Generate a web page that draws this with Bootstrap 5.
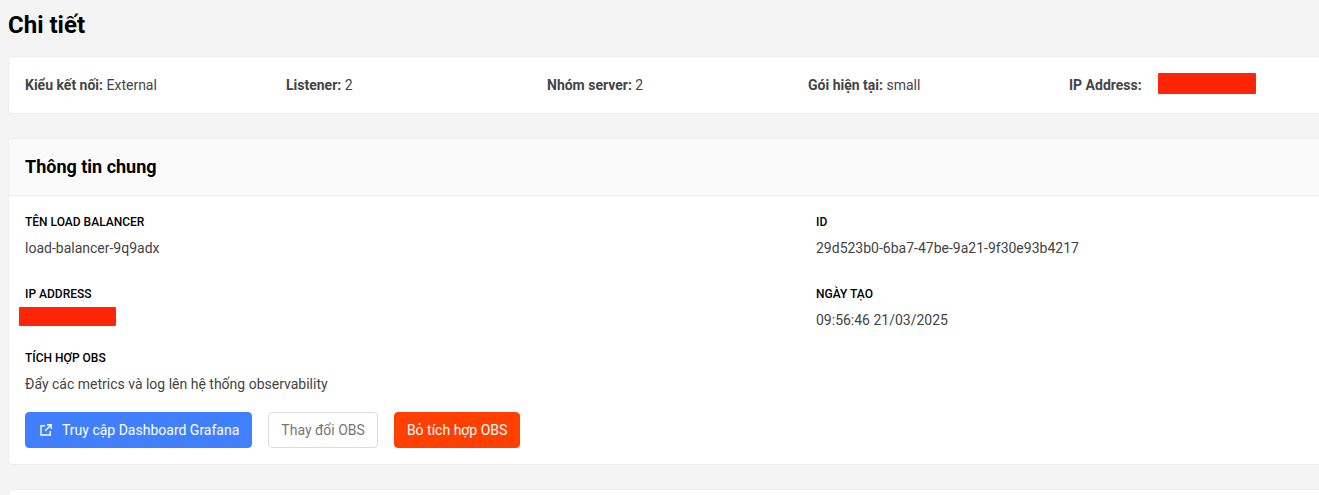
<!DOCTYPE html>
<html lang="vi">
<head>
<meta charset="utf-8">
<title>Chi tiết</title>
<link href="https://cdn.jsdelivr.net/npm/bootstrap@5.3.0/dist/css/bootstrap.min.css" rel="stylesheet">
<style>
html, body { overflow: hidden; height: 495px; }
body { background: #f4f4f4; font-family: Roboto, "Liberation Sans", sans-serif; font-size: 14px; color: #444; }
.lb-page { width: 1616px; padding: 7px 8px 0; }
.lb-title { font-size: 24px; font-weight: 700; color: #000; line-height: 36px; margin: 0 0 13px; }
.lb-card { background: #fff; border: 1px solid #eee; border-radius: 4px; margin-bottom: 24px; }
.lb-summary { width: 1339px; height: 58px; padding: 0 16px; display: grid; grid-template-columns: repeat(5, 261px); align-items: center; }
.lb-summary b { font-weight: 700; }
.lb-head { background: #fafafa; border-bottom: 1px solid #eee; height: 57px; padding: 0 16px; border-radius: 4px 4px 0 0; }
.lb-head h2 { font-size: 18px; font-weight: 700; color: #000; margin: 0; }
.lb-body { padding: 17px 16px 16px; }
.lb-fields { display: grid; grid-template-columns: 791px 1fr; row-gap: 26px; }
.lb-label { font-size: 12px; font-weight: 500; line-height: 18px; color: #000; text-transform: uppercase; margin-bottom: 7px; }
.lb-value { line-height: 21px; }
.lb-holder { position: relative; }
.lb-redact { display: inline-block; background: #ff2506; border-radius: 1px; }
.lb-redact-ip { width: 98px; height: 21px; margin-left: 16px; margin-bottom: 3px; }
.lb-redact-over { position: absolute; left: -6px; top: -3px; width: 97px; height: 19px; }
.lb-obs { margin-top: 18px; }
.lb-actions { margin-top: 17px; display: flex; gap: 16px; }
.lb-btn { height: 36px; font-size: 14px; line-height: 20px; border-radius: 4px; padding: 0 12px; display: inline-flex; align-items: center; }
.lb-btn-blue { background: #4080ff; border: 1px solid #4080ff; color: #fff; gap: 10px; padding-left: 14px; }
.lb-btn-line { background: #fff; border: 1px solid #ddd; color: #777; }
.lb-btn-red { background: #ff4000; border: 1px solid #ff4000; color: #fff; }
.lb-next { height: 60px; }
</style>
</head>
<body>
<div class="lb-page">
  <h1 class="lb-title">Chi tiết</h1>
  <div class="lb-card lb-summary">
    <div><b>Kiểu kết nối:</b> External</div>
    <div><b>Listener:</b> 2</div>
    <div><b>Nhóm server:</b> 2</div>
    <div><b>Gói hiện tại:</b> small</div>
    <div class="d-flex align-items-center"><b>IP Address:</b><span class="lb-redact lb-redact-ip"></span></div>
  </div>
  <div class="lb-card">
    <div class="lb-head d-flex align-items-center"><h2>Thông tin chung</h2></div>
    <div class="lb-body">
      <div class="lb-fields">
        <div><div class="lb-label">Tên Load Balancer</div><div class="lb-value">load-balancer-9q9adx</div></div>
        <div><div class="lb-label">ID</div><div class="lb-value">29d523b0-6ba7-47be-9a21-9f30e93b4217</div></div>
        <div><div class="lb-label">IP Address</div><div class="lb-value lb-holder">&nbsp;<span class="lb-redact lb-redact-over"></span></div></div>
        <div><div class="lb-label">Ngày tạo</div><div class="lb-value">09:56:46 21/03/2025</div></div>
      </div>
      <div class="lb-obs">
        <div class="lb-label">Tích hợp OBS</div>
        <div class="lb-value">Đẩy các metrics và log lên hệ thống observability</div>
      </div>
      <div class="lb-actions">
        <button type="button" class="btn lb-btn lb-btn-blue">
          <svg width="12" height="12" viewBox="0 0 12 12" fill="none" stroke="#fff" stroke-width="1.4" aria-hidden="true"><path d="M5 1.7H1v9.3h9.3V7"/><path d="M7 .8h4.2V5"/><path d="M11 1 5.2 6.8"/></svg>
          Truy cập Dashboard Grafana
        </button>
        <button type="button" class="btn lb-btn lb-btn-line">Thay đổi OBS</button>
        <button type="button" class="btn lb-btn lb-btn-red">Bỏ tích hợp OBS</button>
      </div>
    </div>
  </div>
  <div class="lb-card lb-next"></div>
</div>
<script src="https://cdn.jsdelivr.net/npm/bootstrap@5.3.0/dist/js/bootstrap.bundle.min.js"></script>
</body>
</html>
